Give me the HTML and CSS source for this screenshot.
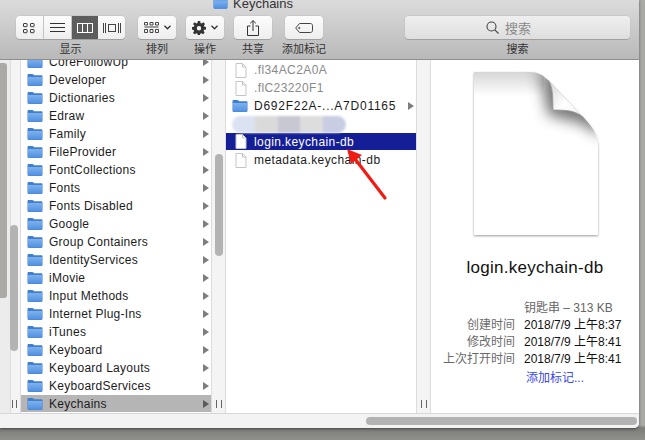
FILE: index.html
```html
<!DOCTYPE html>
<html lang="zh">
<head>
<meta charset="utf-8">
<title>Keychains</title>
<link rel="stylesheet" href="styles.css">
</head>
<body>
<svg class="defs" width="0" height="0">
  <defs>
    <linearGradient id="fg" x1="0" y1="0" x2="0" y2="1"><stop offset="0" stop-color="#7fb2ee"/><stop offset="1" stop-color="#4f8fe0"/></linearGradient>
    <symbol id="folder" viewBox="0 0 16 14">
      <path d="M.5 2.2C.5 1.4 1 1 1.7 1h3.6c.6 0 .9.2 1.2.6l.6.7h7.2c.7 0 1.2.5 1.2 1.2v8.3c0 .7-.5 1.2-1.2 1.2H1.7c-.7 0-1.2-.5-1.2-1.2z" fill="#3f7fd0"/>
      <path d="M1 4h14v8.2c0 .4-.3.6-.7.6H1.7c-.4 0-.7-.2-.7-.6z" fill="url(#fg)"/>
    </symbol>
    <symbol id="doc" viewBox="0 0 12 15">
      <path d="M1 .5h6.5L11 4v10.500H1z" fill="#fff" stroke="#c4c4c4"/>
      <path d="M7.500 .5V4H11" fill="none" stroke="#c4c4c4"/>
    </symbol>
    <symbol id="arr" viewBox="0 0 6 8"><path d="M0 0l6 4-6 4z"/></symbol>
  </defs>
</svg>
<div class="window">
  <header class="toolbar">
    <div class="title">
      <svg class="title-folder"><use href="#folder"/></svg>
      <span>Keychains</span>
    </div>
    <div class="tools">
      <div class="tool tool-view">
        <div class="seg">
          <div class="seg-item">
            <svg width="14" height="12" viewBox="0 0 14 12" fill="none" stroke="#333"><rect x="1.500" y="1.500" width="3.600" height="3.200" rx=".6"/><rect x="8.500" y="1.500" width="3.600" height="3.200" rx=".6"/><rect x="1.500" y="7.500" width="3.600" height="3.200" rx=".6"/><rect x="8.500" y="7.500" width="3.600" height="3.200" rx=".6"/></svg>
          </div>
          <div class="seg-item">
            <svg width="15" height="11" viewBox="0 0 15 11" stroke="#333"><path d="M0 1.500h15M0 5.500h15M0 9.500h15"/></svg>
          </div>
          <div class="seg-item seg-on">
            <svg width="16" height="10" viewBox="0 0 16 10" fill="none" stroke="#fff"><rect x=".5" y=".5" width="15" height="9"/><path d="M5.500 0v10M10.500 0v10"/></svg>
          </div>
          <div class="seg-item">
            <svg width="18" height="10" viewBox="0 0 18 10" fill="none" stroke="#444"><rect x="5.500" y="1.500" width="7" height="7"/><path d="M.5 0v10M2.500 0v10M15.500 0v10M17.500 0v10"/></svg>
          </div>
        </div>
        <span class="tool-label">显示</span>
      </div>
      <div class="tool tool-arrange">
        <div class="btn">
          <svg width="15" height="11" viewBox="0 0 15 11" fill="none" stroke="#333" stroke-width=".9"><path d="M.5 .5h3v2.500h-3zM6 .5h3v2.500H6zM11.500 .5h3v2.500h-3zM.5 5h14M.5 7.500h3v3h-3zM6 7.500h3v3H6zM11.500 7.500h3v3h-3z"/></svg>
          <svg class="chev" width="7" height="5" viewBox="0 0 7 5" fill="none" stroke="#333" stroke-width="1.300"><path d="M.5 .8l3 3 3-3"/></svg>
        </div>
        <span class="tool-label">排列</span>
      </div>
      <div class="tool tool-action">
        <div class="btn">
          <svg width="14" height="14" viewBox="0 0 14 14"><path fill="#333" fill-rule="evenodd" d="M5.800 0h2.400l.3 1.900 1.200.5L11.300 1.300 13 3l-1.100 1.600.5 1.200 1.600.3v2.400l-1.900.3-.5 1.200 1.100 1.600-1.700 1.700-1.600-1.100-1.200.5-.3 1.900H5.800l-.3-1.900-1.200-.5-1.600 1.100L1 11.900l1.100-1.600-.5-1.200L0 8.500V6.100l1.900-.3.5-1.200L1 3l1.700-1.700 1.600 1.100 1.200-.5zM7 5a2.200 2.200 0 1 0 0 4.400A2.200 2.200 0 0 0 7 5z"/></svg>
          <svg class="chev" width="7" height="5" viewBox="0 0 7 5" fill="none" stroke="#333" stroke-width="1.300"><path d="M.5 .8l3 3 3-3"/></svg>
        </div>
        <span class="tool-label">操作</span>
      </div>
      <div class="tool tool-share">
        <div class="btn">
          <svg width="12" height="16" viewBox="0 0 12 16" fill="none" stroke="#333"><path d="M3.500 6H.5v9.500h11V6h-3M6 11V.8M3.200 3.300L6 .6l2.800 2.700"/></svg>
        </div>
        <span class="tool-label">共享</span>
      </div>
      <div class="tool tool-tag">
        <div class="btn">
          <svg width="18" height="10" viewBox="0 0 18 10" fill="none" stroke="#444"><path d="M4.500 .5h11c1 0 2 .8 2 2v5c0 1.200-1 2-2 2h-11L.7 5z"/><circle cx="4.300" cy="5" r=".7"/></svg>
        </div>
        <span class="tool-label">添加标记</span>
      </div>
      <div class="tool tool-search">
        <div class="searchbox">
          <svg width="13" height="13" viewBox="0 0 13 13" fill="none" stroke="#444" stroke-width="1.100"><circle cx="5.500" cy="5.500" r="4.500"/><path d="M8.800 8.800l3.700 3.700"/></svg>
          <span>搜索</span>
        </div>
        <span class="tool-label">搜索</span>
      </div>
    </div>
  </header>

  <main class="browser">
    <div class="col col-0"><div class="thumb-0"></div></div>
    <div class="sep sep-0"><div class="thumb thumb-a"></div><span class="grip"></span></div>
    <div class="col col-1">
      <div class="row"><svg class="ico"><use href="#folder"/></svg><span class="name">CoreFollowUp</span><svg class="arr"><use href="#arr"/></svg></div>
      <div class="row"><svg class="ico"><use href="#folder"/></svg><span class="name">Developer</span><svg class="arr"><use href="#arr"/></svg></div>
      <div class="row"><svg class="ico"><use href="#folder"/></svg><span class="name">Dictionaries</span><svg class="arr"><use href="#arr"/></svg></div>
      <div class="row"><svg class="ico"><use href="#folder"/></svg><span class="name">Edraw</span><svg class="arr"><use href="#arr"/></svg></div>
      <div class="row"><svg class="ico"><use href="#folder"/></svg><span class="name">Family</span><svg class="arr"><use href="#arr"/></svg></div>
      <div class="row"><svg class="ico"><use href="#folder"/></svg><span class="name">FileProvider</span><svg class="arr"><use href="#arr"/></svg></div>
      <div class="row"><svg class="ico"><use href="#folder"/></svg><span class="name">FontCollections</span><svg class="arr"><use href="#arr"/></svg></div>
      <div class="row"><svg class="ico"><use href="#folder"/></svg><span class="name">Fonts</span><svg class="arr"><use href="#arr"/></svg></div>
      <div class="row"><svg class="ico"><use href="#folder"/></svg><span class="name">Fonts Disabled</span><svg class="arr"><use href="#arr"/></svg></div>
      <div class="row"><svg class="ico"><use href="#folder"/></svg><span class="name">Google</span><svg class="arr"><use href="#arr"/></svg></div>
      <div class="row"><svg class="ico"><use href="#folder"/></svg><span class="name">Group Containers</span><svg class="arr"><use href="#arr"/></svg></div>
      <div class="row"><svg class="ico"><use href="#folder"/></svg><span class="name">IdentityServices</span><svg class="arr"><use href="#arr"/></svg></div>
      <div class="row"><svg class="ico"><use href="#folder"/></svg><span class="name">iMovie</span><svg class="arr"><use href="#arr"/></svg></div>
      <div class="row"><svg class="ico"><use href="#folder"/></svg><span class="name">Input Methods</span><svg class="arr"><use href="#arr"/></svg></div>
      <div class="row"><svg class="ico"><use href="#folder"/></svg><span class="name">Internet Plug-Ins</span><svg class="arr"><use href="#arr"/></svg></div>
      <div class="row"><svg class="ico"><use href="#folder"/></svg><span class="name">iTunes</span><svg class="arr"><use href="#arr"/></svg></div>
      <div class="row"><svg class="ico"><use href="#folder"/></svg><span class="name">Keyboard</span><svg class="arr"><use href="#arr"/></svg></div>
      <div class="row"><svg class="ico"><use href="#folder"/></svg><span class="name">Keyboard Layouts</span><svg class="arr"><use href="#arr"/></svg></div>
      <div class="row"><svg class="ico"><use href="#folder"/></svg><span class="name">KeyboardServices</span><svg class="arr"><use href="#arr"/></svg></div>
      <div class="row row-current"><svg class="ico"><use href="#folder"/></svg><span class="name">Keychains</span><svg class="arr"><use href="#arr"/></svg></div>
    </div>
    <div class="sep sep-1"><div class="thumb thumb-b"></div><span class="grip"></span></div>
    <div class="col col-2">
      <div class="row row-dim"><svg class="ico-doc"><use href="#doc"/></svg><span class="name">.fl34AC2A0A</span></div>
      <div class="row row-dim"><svg class="ico-doc"><use href="#doc"/></svg><span class="name">.flC23220F1</span></div>
      <div class="row row-wide"><svg class="ico"><use href="#folder"/></svg><span class="name">D692F22A-...A7D01165</span><svg class="arr"><use href="#arr"/></svg></div>
      <div class="row"><div class="smudge"><i></i><i></i><i></i><i></i><i></i></div></div>
      <div class="row row-selected"><svg class="ico-doc"><use href="#doc"/></svg><span class="name">login.keychain-db</span></div>
      <div class="row row-meta"><svg class="ico-doc"><use href="#doc"/></svg><span class="name">metadata.keychain-db</span></div>
    </div>
    <div class="sep sep-2"><span class="grip"></span></div>
    <aside class="preview">
      <svg class="big-doc" width="134" height="172" viewBox="0 0 134 172">
        <defs>
          <linearGradient id="topshade" x1="0" y1="0" x2="0" y2="1"><stop offset="0" stop-color="#d6d6d6"/><stop offset="1" stop-color="#fff"/></linearGradient>
          <linearGradient id="flap" x1="0" y1="0" x2="1" y2="1"><stop offset="0" stop-color="#d4d4d4"/><stop offset=".55" stop-color="#fff"/><stop offset="1" stop-color="#f2f2f2"/></linearGradient>
          <filter id="ds" x="-10%" y="-10%" width="120%" height="120%"><feDropShadow dx="0" dy="1" stdDeviation="1" flood-color="#000" flood-opacity=".4"/></filter>
          <filter id="soft" x="-50%" y="-50%" width="200%" height="200%"><feGaussianBlur stdDeviation="7"/></filter>
          <clipPath id="body"><path d="M4 3h56c8 0 13 3 18 8l34 36c9 9 16 17 16 32v87H4z"/></clipPath>
        </defs>
        <path filter="url(#ds)" d="M4 3h56c8 0 13 3 18 8l34 36c9 9 16 17 16 32v87H4z" fill="#fff"/>
        <g clip-path="url(#body)">
          <rect x="4" y="3" width="70" height="24" fill="url(#topshade)"/>
          <path d="M66 3h20l46 46v18L110 54 78 46 72 14z" fill="#666" opacity=".9" filter="url(#soft)"/>
        </g>
        <path d="M78 11c4 5 5 12 5 30 12 0 23 0 31 8z" fill="url(#flap)"/>
        <path d="M78 11c4 5 5 12 5 30 12 0 23 0 31 8" fill="none" stroke="#9a9a9a" stroke-width=".8"/>
      </svg>
      <div class="file-name">login.keychain-db</div>
      <dl class="meta">
        <dt></dt><dd class="kind">钥匙串 – 313 KB</dd>
        <dt>创建时间</dt><dd>2018/7/9 上午8:37</dd>
        <dt>修改时间</dt><dd>2018/7/9 上午8:41</dd>
        <dt>上次打开时间</dt><dd>2018/7/9 上午8:41</dd>
        <dt></dt><dd class="link">添加标记...</dd>
      </dl>
    </aside>
  </main>

  <footer class="hbar"><div class="hthumb"></div></footer>
</div>
<svg class="pointer" width="50" height="58" viewBox="0 0 50 58">
  <path d="M41 52L8 9" stroke="#f01c14" stroke-width="3.200" stroke-linecap="round" fill="none"/>
  <path d="M3 3l15 6-11 9z" fill="#f01c14"/>
</svg>
</body>
</html>
```

FILE: styles.css
```css
* { box-sizing: border-box; }
html, body { margin: 0; height: 100%; }
body {
  position: relative;
  overflow: hidden;
  background: linear-gradient(#a9a9a6 0, #a9a9a6 425px, #7d7d7a 428px, #8f8f8c 440px);
  font-family: "Liberation Sans", "Noto Sans CJK SC", sans-serif;
  font-size: 12px;
  color: #1c1c1c;
}
.defs { position: absolute; }
.window {
  width: 639px;
  height: 428px;
  display: flex;
  flex-direction: column;
  background: #fff;
  border-bottom-right-radius: 5px;
  overflow: hidden;
  box-shadow: 0 1px 3px rgba(0,0,0,.45);
}

/* Toolbar */
.toolbar {
  flex: 0 0 60px;
  background: linear-gradient(#dbdbdb, #b9b9b9);
  border-bottom: 1px solid #8e8e8e;
  overflow: hidden;
}
.title {
  height: 16px;
  margin-top: -5px;
  padding-left: 213px;
  display: flex;
  align-items: center;
  gap: 5px;
  font-size: 13px;
  color: #333;
}
.title-folder { width: 15px; height: 14px; }
.tools {
  display: flex;
  margin-top: 5px;
  padding-left: 16px;
}
.tool {
  display: flex;
  flex-direction: column;
  align-items: center;
}
.tool-view { width: 109px; margin-right: 13px; }
.tool-arrange, .tool-action, .tool-share, .tool-tag { width: 38px; }
.tool-arrange, .tool-action { margin-right: 10px; }
.tool-share { margin-right: 13px; }
.tool-tag { margin-right: 82px; }
.tool-search { width: 225px; }
.tool-label {
  font-size: 11px;
  line-height: 18px;
  color: #333;
  white-space: nowrap;
  font-family: "Noto Sans CJK SC", sans-serif;
}
.seg, .btn, .searchbox {
  height: 23px;
  background: linear-gradient(#fcfcfc, #eeeeee);
  border-radius: 4px;
  box-shadow: 0 1px 0 #a0a0a0, 0 0 0 .5px #c0c0c0;
  display: flex;
  align-items: center;
}
.seg { width: 100%; overflow: hidden; }
.seg-item {
  flex: 1;
  height: 100%;
  display: flex;
  align-items: center;
  justify-content: center;
  border-right: 1px solid #c4c4c4;
}
.seg-item:last-child { border-right: 0; }
.seg-on { background: #5d5d5d; border-right: 0; }
.btn { width: 100%; justify-content: center; gap: 5px; }
.searchbox {
  width: 100%;
  justify-content: center;
  gap: 6px;
  padding-right: 18px;
  background: linear-gradient(#efefef, #dedede);
  color: #8a8a8a;
  font-size: 13px;
  font-family: "Noto Sans CJK SC", sans-serif;
}

/* Columns */
.browser { flex: 1; display: flex; min-height: 0; overflow: hidden; }
.col { overflow: hidden; background: #fff; }
.col-0 { width: 10px; background: #ececec; position: relative; }
.thumb-0 {
  position: absolute;
  left: 0;
  top: 3px;
  width: 7px;
  height: 235px;
  background: #aaa9a6;
  border-radius: 0 3px 3px 0;
}
.col-1 { width: 190px; }
.col-1 .row:first-child { margin-top: -7px; }
.col-2 { width: 190px; padding-top: 1px; }
.sep {
  position: relative;
  background: #f4f4f4;
  border-left: 1px solid #dcdcdc;
  border-right: 1px solid #dcdcdc;
}
.sep-0 { width: 11px; }
.sep-1, .sep-2 { width: 15px; }
.thumb {
  position: absolute;
  width: 8px;
  background: #b3b3b3;
  border-radius: 4px;
}
.thumb-a { left: -1px; top: 165px; height: 126px; }
.thumb-b { left: 3px; top: 94px; height: 102px; }
.grip {
  position: absolute;
  bottom: 5px;
  left: 4px;
  width: 6px;
  height: 8px;
  border-left: 1px solid #666;
  border-right: 1px solid #666;
}
.sep-0 .grip { left: 1px; width: 5px; }

.row {
  height: 18px;
  display: flex;
  align-items: center;
  padding-left: 6px;
  padding-right: 2px;
  white-space: nowrap;
  letter-spacing: .27px;
}
.ico { width: 16px; height: 14px; flex: none; }
.ico-doc { width: 12px; height: 15px; flex: none; margin: 0 1px 0 3px; }
.name { margin-left: 6px; flex: 1; overflow: hidden; }
.arr { width: 6px; height: 8px; flex: none; fill: #7d7d7d; }
.row-current { background: #b5b5b5; height: 17px; }
.row-current .arr { fill: #5a5a5a; }
.row-dim { color: #8a8a8a; letter-spacing: .4px; }
.row-wide { letter-spacing: .75px; }
.row-meta { letter-spacing: .42px; }
.row-selected { background: #141e96; color: #fff; height: 17px; margin-bottom: 1px; letter-spacing: .4px; }
.col-2 .row { padding-left: 6px; padding-right: 2px; }
.smudge {
  display: flex;
  width: 114px;
  height: 17px;
  filter: blur(1px);
  border-radius: 9px;
  overflow: hidden;
}
.smudge i { flex: 1; }
.smudge i:nth-child(1) { background: #dbe2f1; }
.smudge i:nth-child(2) { background: #dadada; }
.smudge i:nth-child(3) { background: #c7c8d2; }
.smudge i:nth-child(4) { background: #dddddd; }
.smudge i:nth-child(5) { background: #c8cde4; }

/* Preview */
.preview {
  flex: 1;
  min-width: 0;
  display: flex;
  flex-direction: column;
  align-items: center;
  padding-top: 9px;
}
.big-doc { flex: none; margin-left: 3px; }
.file-name {
  margin-top: 16px;
  font-size: 17px;
  letter-spacing: .27px;
  line-height: 22px;
  color: #111;
}
.meta {
  margin: 21px 0 0;
  padding-left: 12px;
  display: grid;
  grid-template-columns: 72px auto;
  column-gap: 9px;
  grid-auto-rows: 17px;
  line-height: 17px;
  align-self: flex-start;
}
.meta dt { text-align: right; color: #6b6b6b; white-space: nowrap; }
.meta dd { margin: 0; white-space: nowrap; color: #111; }
.meta .kind { color: #666; }
.meta .link { color: #3a48e8; margin-left: 2px; margin-top: 2px; }

/* Horizontal scroller */
.hbar {
  flex: 0 0 15px;
  background: #f3f3f3;
  border-top: 1px solid #d8d8d8;
  padding: 3px 2px 3px 366px;
}
.hthumb { height: 8px; background: #b3b3b3; border-radius: 4px; }

/* Annotation */
.pointer { position: absolute; left: 344px; top: 146px; }
```
